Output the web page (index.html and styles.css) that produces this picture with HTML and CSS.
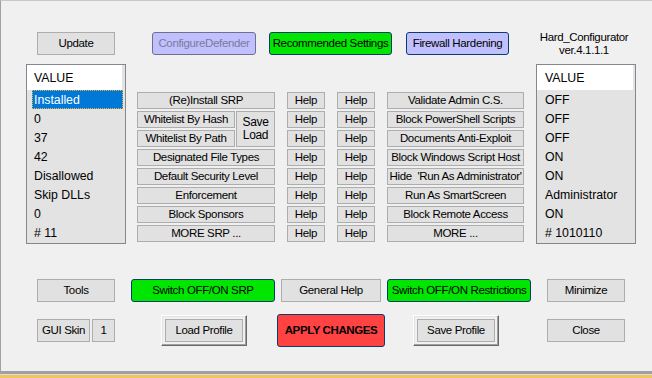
FILE: index.html
```html
<!DOCTYPE html>
<html lang="en">
<head>
    <meta charset="UTF-8">
    <title>Hard_Configurator</title>
    <link rel="stylesheet" href="styles.css">
</head>
<body>

<div class="window">
    <div class="row top-row">
        <button class="btn btn-big update">Update</button>
        <button class="btn btn-big btn-lav btn-off defender">ConfigureDefender</button>
        <button class="btn btn-big btn-green recommended">Recommended Settings</button>
        <button class="btn btn-big btn-lav firewall">Firewall Hardening</button>
        <div class="version">Hard_Configurator<br>ver.4.1.1.1</div>
    </div>

    <div class="row main-row">
        <div class="listbox list-left">
            <div class="list-head">VALUE</div>
            <div class="list-item selected">Installed</div>
            <div class="list-item">0</div>
            <div class="list-item">37</div>
            <div class="list-item">42</div>
            <div class="list-item">Disallowed</div>
            <div class="list-item">Skip DLLs</div>
            <div class="list-item">0</div>
            <div class="list-item"># 11</div>
        </div>

        <div class="srp-grid">
            <button class="btn c-srp">(Re)Install SRP</button>
            <button class="btn c-help1">Help</button>
            <button class="btn c-help2">Help</button>
            <button class="btn c-right">Validate Admin C.S.</button>

            <button class="btn c-half">Whitelist By Hash</button>
            <button class="btn c-saveload">Save<br>Load</button>
            <button class="btn c-help1">Help</button>
            <button class="btn c-help2">Help</button>
            <button class="btn c-right">Block PowerShell Scripts</button>

            <button class="btn c-half">Whitelist By Path</button>
            <button class="btn c-help1">Help</button>
            <button class="btn c-help2">Help</button>
            <button class="btn c-right">Documents Anti-Exploit</button>

            <button class="btn c-srp">Designated File Types</button>
            <button class="btn c-help1">Help</button>
            <button class="btn c-help2">Help</button>
            <button class="btn c-right">Block Windows Script Host</button>

            <button class="btn c-srp">Default Security Level</button>
            <button class="btn c-help1">Help</button>
            <button class="btn c-help2">Help</button>
            <button class="btn c-right pre">Hide  'Run As Administrator'</button>

            <button class="btn c-srp">Enforcement</button>
            <button class="btn c-help1">Help</button>
            <button class="btn c-help2">Help</button>
            <button class="btn c-right">Run As SmartScreen</button>

            <button class="btn c-srp">Block Sponsors</button>
            <button class="btn c-help1">Help</button>
            <button class="btn c-help2">Help</button>
            <button class="btn c-right">Block Remote Access</button>

            <button class="btn c-srp">MORE SRP ...</button>
            <button class="btn c-help1">Help</button>
            <button class="btn c-help2">Help</button>
            <button class="btn c-right">MORE ...</button>
        </div>

        <div class="listbox list-right">
            <div class="list-head">VALUE</div>
            <div class="list-item">OFF</div>
            <div class="list-item">OFF</div>
            <div class="list-item">OFF</div>
            <div class="list-item">ON</div>
            <div class="list-item">ON</div>
            <div class="list-item">Administrator</div>
            <div class="list-item">ON</div>
            <div class="list-item"># 1010110</div>
        </div>
    </div>

    <div class="row bottom-row">
        <button class="btn btn-big tools">Tools</button>
        <button class="btn btn-big btn-green switch-srp">Switch OFF/ON SRP</button>
        <button class="btn btn-big general-help">General Help</button>
        <button class="btn btn-big btn-green switch-restr">Switch OFF/ON Restrictions</button>
        <button class="btn btn-big minimize">Minimize</button>
    </div>

    <div class="row action-row">
        <button class="btn btn-big gui-skin">GUI Skin</button>
        <button class="btn btn-big skin-num">1</button>
        <div class="profile load-profile"><button class="btn">Load Profile</button></div>
        <button class="btn btn-apply">APPLY CHANGES</button>
        <div class="profile save-profile"><button class="btn">Save Profile</button></div>
        <button class="btn btn-big close">Close</button>
    </div>
</div>
<div class="frame-bottom"></div>
<div class="taskbar-edge"></div>

</body>
</html>
```

FILE: styles.css
```css
body {
    margin: 0;
    background-color: #f0f0f0;
    font-family: "Liberation Sans", Arial, sans-serif;
    font-size: 11.5px;
    letter-spacing: -0.35px;
    color: #000;
    overflow: hidden;
}
.window {
    height: 371px;
    box-sizing: border-box;
    border-top: 1px solid #c8c8c8;
    border-left: 1px solid #a0a0a0;
}
.frame-bottom {
    height: 3px;
    background-color: #a0a0a0;
    border-bottom: 1px solid #dcdcdc;
}
.taskbar-edge {
    height: 3px;
    background-color: #f2c45e;
}

.row {
    display: flex;
}
.top-row {
    margin-top: 31px;
    padding-left: 36px;
    height: 23px;
    align-items: flex-start;
}
.main-row {
    margin-top: 9px;
    padding-left: 25px;
    align-items: flex-start;
}
.bottom-row {
    margin-top: 35px;
    padding-left: 36px;
    height: 23px;
}
.action-row {
    margin-top: 12px;
    padding-left: 36px;
    height: 33px;
    align-items: center;
}

/* buttons */
.btn {
    box-sizing: border-box;
    margin: 0;
    padding: 0;
    font: inherit;
    letter-spacing: inherit;
    color: #000;
    background-color: #e1e1e1;
    border: 1px solid #adadad;
    display: flex;
    align-items: center;
    justify-content: center;
    white-space: nowrap;
    overflow: visible;
    line-height: 13px;
}
.btn-big {
    height: 23px;
}
.btn-lav {
    background-color: #c0c0ff;
    border-color: #0c3b6e;
    border-radius: 3px;
}
.btn-green {
    background-color: #00e600;
    border-color: #0c3b6e;
    border-radius: 3px;
}
.btn-off {
    color: #7a7a9c;
    border-color: #70708e;
}
.pre {
    white-space: pre;
}

.update { width: 78px; }
.defender { margin-left: 37px; width: 104px; }
.recommended { margin-left: 13px; width: 123px; }
.firewall { margin-left: 14px; width: 103px; }
.version {
    margin-left: 25px;
    margin-top: -1px;
    width: 100px;
    text-align: center;
    line-height: 13px;
}

/* list boxes */
.listbox {
    box-sizing: border-box;
    width: 100px;
    height: 180px;
    border: 1px solid #828790;
    background-color: #e3e3e3;
    font-size: 12.3px;
    letter-spacing: 0;
}
.list-head,
.list-item {
    box-sizing: border-box;
    padding-top: 1px;
}
.list-head {
    height: 25px;
    line-height: 24px;
    background-color: #fff;
    margin-right: 3px;
    padding-left: 7px;
}
.list-item {
    height: 19px;
    line-height: 18px;
    padding-left: 7px;
}
.list-item.selected {
    margin-left: 5px;
    margin-right: 2px;
    padding-left: 2px;
    background-color: #0078d7;
    color: #fff;
    outline: 1px dotted #f5b02e;
    outline-offset: -1px;
}
.list-right {
    margin-left: 12px;
}
.list-right .list-head {
    margin-right: 2px;
    padding-left: 8px;
}
.list-right .list-item {
    padding-left: 8px;
}

/* SRP button grid */
.srp-grid {
    margin-left: 11px;
    margin-top: 28px;
    display: grid;
    grid-template-columns: 98px 1px 39px 12px 38px 12px 38px 12px 137px;
    grid-template-rows: repeat(8, 17px);
    row-gap: 2px;
}
.c-srp { grid-column: 1 / 4; }
.c-half { grid-column: 1; }
.c-saveload {
    grid-column: 3;
    grid-row: span 2;
    font-size: 12px;
}
.c-help1 { grid-column: 5; }
.c-help2 { grid-column: 7; }
.c-right { grid-column: 9; }

/* bottom rows */
.tools { width: 78px; }
.switch-srp { margin-left: 16px; width: 144px; }
.general-help { margin-left: 6px; width: 100px; }
.switch-restr { margin-left: 6px; width: 144px; }
.minimize { margin-left: 16px; width: 78px; }

.gui-skin { width: 53px; }
.skin-num { margin-left: 2px; width: 23px; }
.profile {
    box-sizing: border-box;
    width: 86px;
    height: 31px;
    padding: 3px;
    border: 1px solid;
    border-color: #fff #696969 #696969 #fff;
    box-shadow: inset -1px -1px #a0a0a0, inset 1px 1px #e3e3e3;
}
.profile .btn {
    width: 78px;
    height: 23px;
}
.load-profile { margin-left: 46px; }
.save-profile { margin-left: 28px; }
.btn-apply {
    margin-left: 30px;
    width: 108px;
    height: 33px;
    background-color: #ff4343;
    border-color: #0c3b6e;
    border-radius: 3px;
    font-weight: bold;
    letter-spacing: -0.4px;
}
.close { margin-left: 48px; width: 78px; }
```
